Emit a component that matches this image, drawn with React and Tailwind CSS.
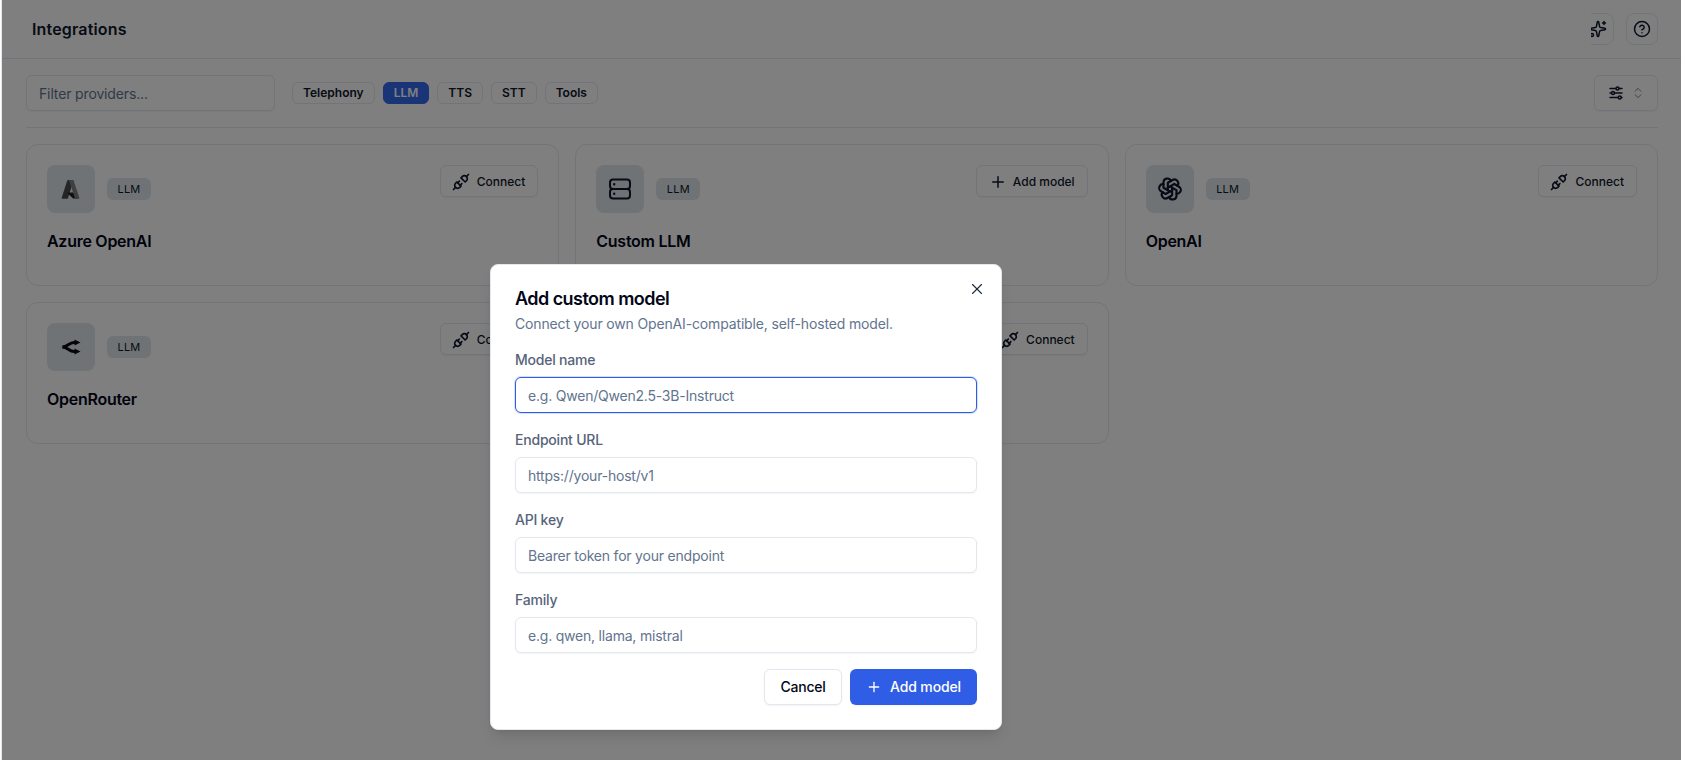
import React from "react";
import { Sparkles, CircleHelp, ChevronsUpDown, Plus, X } from "lucide-react";
import { TbPlugConnected, TbBrandOpenai, TbAdjustmentsHorizontal } from "react-icons/tb";

const AzureIcon = () => (
  <svg width="24" height="24" viewBox="0 0 24 24">
    <path d="M9.2 3h5.4L9 21.2a1 1 0 0 1-.9.6H3.6a.9.9 0 0 1-.85-1.2L8.3 3.6A.9.9 0 0 1 9.2 3z" fill="#4a4a4a" />
    <path d="M17.2 15.4H8.6a.4.4 0 0 0-.27.7l5.5 5.2a.9.9 0 0 0 .6.24h4.9z" fill="#222" />
    <path d="M14.6 3.6a.9.9 0 0 0-.85-.6H9.3a.9.9 0 0 1 .85.6l5.55 17a.9.9 0 0 1-.85 1.2h4.55a.9.9 0 0 0 .85-1.2z" fill="#808080" />
  </svg>
);

const RouterIcon = () => (
  <svg width="24" height="24" viewBox="0 0 24 24" fill="none" stroke="#0a0a0a" strokeWidth="3">
    <path d="M3.5 12C8.5 12 10 7.4 15 7.4h2" />
    <path d="M3.5 12C8.5 12 10 16.6 15 16.6h2" />
    <path d="M15.5 4.4 21.5 7.4l-6 3z M15.5 13.6l6 3-6 3z" fill="#0a0a0a" stroke="none" />
  </svg>
);

const ServerIcon = () => (
  <svg width="24" height="24" viewBox="0 0 24 24" fill="none" stroke="#0f172a" strokeWidth="2">
    <rect x="2" y="2.5" width="20" height="9.5" rx="3" />
    <rect x="2" y="12" width="20" height="9.5" rx="3" />
    <path d="M6.2 7.2h.01M6.2 16.8h.01" strokeWidth="2.4" strokeLinecap="round" />
  </svg>
);

function ActionButton({ icon, label, wide }) {
  return (
    <button
      className={
        wide
          ? "h-8 pl-3 pr-3 pt-px flex items-center gap-[6px] rounded-md border border-slate-200 bg-white text-xs font-medium text-slate-900 shadow-xs whitespace-nowrap"
          : "h-8 pl-[10px] pr-3 pt-px flex items-center gap-[6px] rounded-md border border-slate-200 bg-white text-xs font-medium text-slate-900 shadow-xs whitespace-nowrap"
      }
    >
      {icon}
      {label}
    </button>
  );
}

function Card({ logo, name, action, actionLabel, wide }) {
  return (
    <div className="min-h-[142px] rounded-xl border border-slate-200 bg-white p-5">
      <div className="flex items-start justify-between">
        <div className="flex items-center gap-3">
          <div className="size-12 rounded-lg bg-[#dfe7ec] flex items-center justify-center">{logo}</div>
          <span className="h-[22px] w-11 justify-center rounded-md bg-[#dfe7ec] flex items-center text-[11px] font-normal tracking-[0.02em] text-slate-900">LLM</span>
        </div>
        <ActionButton icon={action} label={actionLabel} wide={wide} />
      </div>
      <h3 className="mt-4 text-base leading-6 font-semibold tracking-[-0.017em] text-slate-950">{name}</h3>
    </div>
  );
}

function Field({ label, placeholder, focused }) {
  return (
    <div className="flex flex-col gap-[7px]">
      <label className="text-sm leading-5 font-medium tracking-[-0.015em] text-[#56637a]">{label}</label>
      <input
        readOnly
        placeholder={placeholder}
        className={
          focused
            ? "h-9 w-full rounded-md border border-[#2f5de5] ring-1 ring-[#2f5de5]/20 bg-white px-3 text-sm tracking-[-0.015em] placeholder:text-slate-500 outline-none"
            : "h-9 w-full rounded-md border border-slate-200 bg-white px-3 text-sm tracking-[-0.015em] placeholder:text-slate-500 outline-none shadow-xs"
        }
      />
    </div>
  );
}

const plug = <TbPlugConnected size={20} />;

export default function App() {
  return (
    <div className="relative h-[760px] overflow-hidden bg-white font-['Inter',sans-serif] text-slate-900 border-l border-slate-200 ml-px">
      <header className="h-[59px] flex items-center justify-between pl-[30px] pr-[23px] border-b border-slate-200">
        <h1 className="text-base font-semibold tracking-[0.01em]">Integrations</h1>
        <div className="flex items-center gap-3">
          <button className="size-8 rounded-lg border border-slate-200 flex items-center justify-center [clip-path:inset(0_0_0_9px)]"><Sparkles size={18} /></button>
          <button className="size-8 rounded-lg border border-slate-200 flex items-center justify-center"><CircleHelp size={18} /></button>
        </div>
      </header>
      <main className="pl-6 pr-[23px] pt-4">
        <div className="flex items-center justify-between pb-4 border-b border-slate-200">
          <div className="flex items-center gap-[17px]">
            <input readOnly placeholder="Filter providers..." className="w-[249px] h-9 rounded-md border border-slate-200 px-3 text-sm tracking-[-0.01em] placeholder:text-slate-500 shadow-xs outline-none" />
            <div className="flex items-center gap-2">
              {["Telephony", "LLM", "TTS", "STT", "Tools"].map((t) => (
                <button
                  key={t}
                  className={
                    t === "LLM"
                      ? "h-[22px] px-[10px] rounded-md border border-[#3468f0] bg-[#3468f0] text-white text-xs font-semibold"
                      : "h-[22px] px-[10px] rounded-md border border-slate-200 bg-white text-xs font-semibold"
                  }
                >
                  {t}
                </button>
              ))}
            </div>
          </div>
          <button className="w-[64px] h-9 pl-[12px] rounded-md border border-slate-200 flex items-center gap-[6px] shadow-xs">
            <TbAdjustmentsHorizontal size={18} />
            <ChevronsUpDown size={14} strokeWidth={1.5} className="text-slate-500" />
          </button>
        </div>
        <div className="grid grid-cols-3 gap-4 mt-4">
          <Card logo={<AzureIcon />} name="Azure OpenAI" action={plug} actionLabel="Connect" />
          <Card logo={<ServerIcon />} name="Custom LLM" action={<Plus size={18} />} actionLabel="Add model" wide />
          <Card logo={<TbBrandOpenai size={26} />} name="OpenAI" action={plug} actionLabel="Connect" />
          <Card logo={<RouterIcon />} name="OpenRouter" action={plug} actionLabel="Connect" />
          <Card logo={<ServerIcon />} name="Custom" action={plug} actionLabel="Connect" />
        </div>
      </main>
      <div className="absolute inset-0 bg-black/50" />
      <div className="absolute left-[488px] top-[264px] w-[512px] rounded-lg border border-slate-200 bg-white p-6 shadow-lg">
        <button className="absolute right-[15px] top-[15px] text-slate-800"><X size={18} strokeWidth={1.5} /></button>
        <h2 className="text-lg leading-5 font-semibold tracking-[-0.03em] text-slate-950">Add custom model</h2>
        <p className="mt-[5px] text-sm leading-5 tracking-[-0.011em] text-slate-500">Connect your own OpenAI-compatible, self-hosted model.</p>
        <div className="mt-4 flex flex-col gap-[17px]">
          <Field label="Model name" placeholder="e.g. Qwen/Qwen2.5-3B-Instruct" focused />
          <Field label="Endpoint URL" placeholder="https://your-host/v1" />
          <Field label="API key" placeholder="Bearer token for your endpoint" />
          <Field label="Family" placeholder="e.g. qwen, llama, mistral" />
        </div>
        <div className="mt-4 flex justify-end gap-2">
          <button className="h-9 w-[78px] rounded-md border border-slate-200 bg-white text-sm font-medium tracking-[-0.015em] text-slate-950 shadow-xs">Cancel</button>
          <button className="h-9 w-[127px] rounded-md bg-[#2f5de5] text-white text-sm font-medium tracking-[-0.01em] flex items-center justify-center gap-2 shadow-xs"><Plus size={16} />Add model</button>
        </div>
      </div>
    </div>
  );
}
